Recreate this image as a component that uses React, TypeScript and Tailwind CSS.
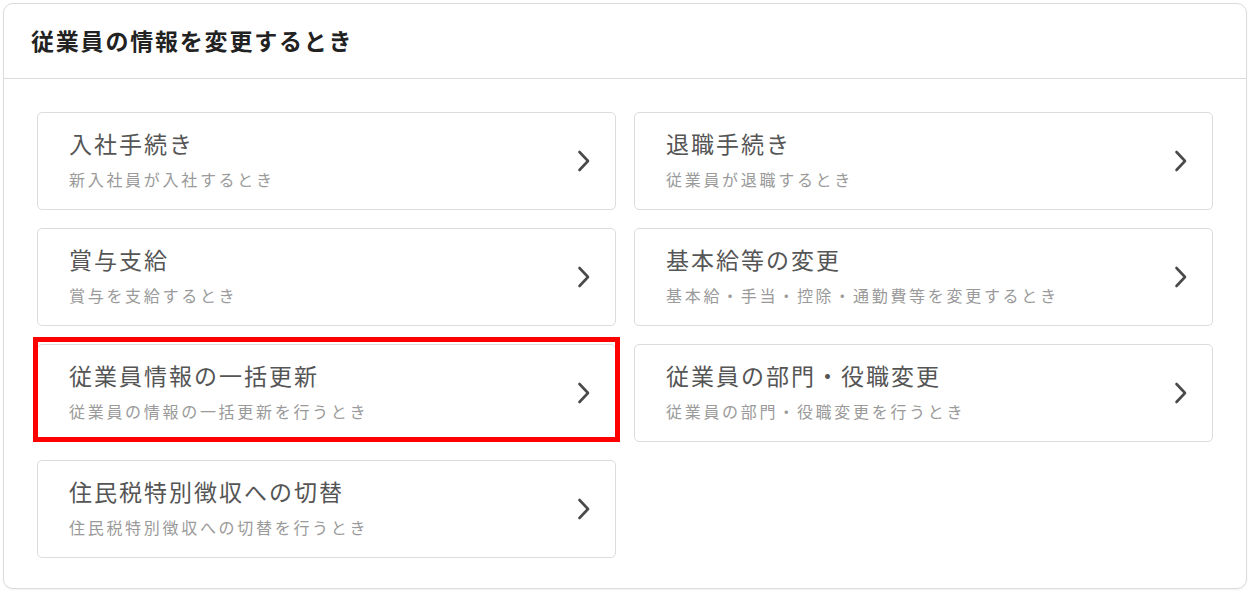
import React from "react";

const items = [
  { title: "入社手続き", sub: "新入社員が入社するとき" },
  { title: "退職手続き", sub: "従業員が退職するとき" },
  { title: "賞与支給", sub: "賞与を支給するとき" },
  { title: "基本給等の変更", sub: "基本給・手当・控除・通勤費等を変更するとき" },
  { title: "従業員情報の一括更新", sub: "従業員の情報の一括更新を行うとき", hl: true },
  { title: "従業員の部門・役職変更", sub: "従業員の部門・役職変更を行うとき" },
  { title: "住民税特別徴収への切替", sub: "住民税特別徴収への切替を行うとき" },
];

function Chevron() {
  return (
    <svg width="14" height="22" viewBox="0 0 14 22" fill="none">
      <path d="M2.5 2 L11 11 L2.5 20" stroke="#4a4a4a" strokeWidth="2.6" strokeLinecap="round" strokeLinejoin="round" />
    </svg>
  );
}

export default function App() {
  return (
    <div
      className="w-[1258px] h-[595px] bg-white pt-[3px] pl-[3px]"
      style={{ fontFamily: '"Noto Sans CJK JP", "Noto Sans", sans-serif' }}
    >
      <div className="w-[1244px] h-[586px] rounded-[10px] border border-[#dcdcdc] bg-white shadow-[0_1px_2px_rgba(0,0,0,0.06)]">
        <div className="h-[75px] border-b border-[#dcdcdc] flex items-center pl-[27px] pb-[2px]">
          <h1 className="text-[23px] font-bold text-[#222] tracking-[1.8px]">従業員の情報を変更するとき</h1>
        </div>
        <div className="grid grid-cols-2 gap-x-[18px] gap-y-[18px] px-[33px] pt-[33px]">
          {items.map((it) => (
            <div
              key={it.title}
              className="relative h-[98px] rounded-[5px] border border-[#dcdcdc] bg-white flex items-center justify-between pl-[31px] pr-[24px]"
            >
              <div className="flex flex-col pb-[4px]">
                <span className="text-[23px] leading-[30px] text-[#555] tracking-[2px]">{it.title}</span>
                <span className="text-[16px] leading-[22px] mt-[10px] text-[#9a9a9a] tracking-[2.7px]">{it.sub}</span>
              </div>
              <Chevron />
              {it.hl && (
                <div className="absolute left-[-5px] right-[-5px] top-[-8px] bottom-[-1px] border-[5px] border-[#ff0000]" />
              )}
            </div>
          ))}
        </div>
      </div>
    </div>
  );
}
